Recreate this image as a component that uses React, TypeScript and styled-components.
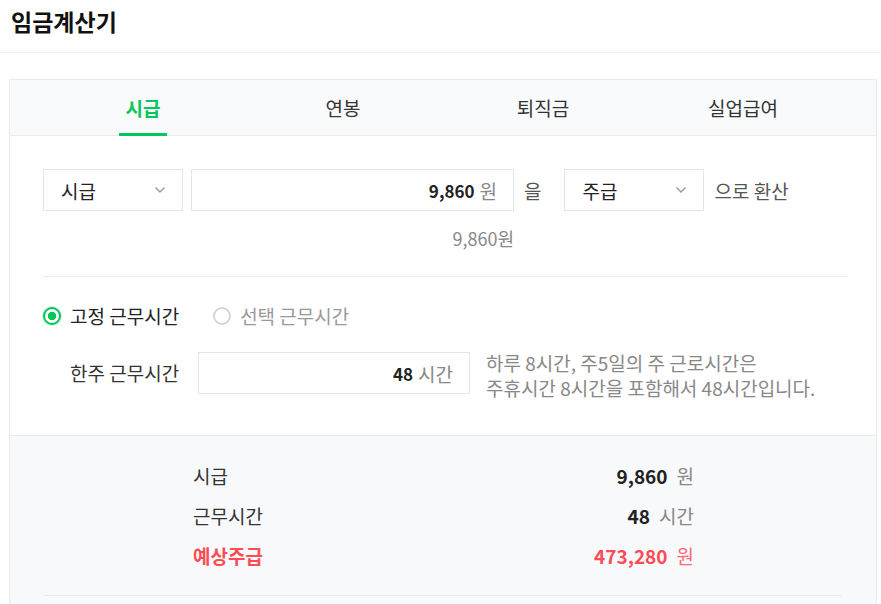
import styled, { createGlobalStyle } from "styled-components";
import { useState } from "react";

const GlobalStyle = createGlobalStyle`
  body {
    margin: 0;
    background: #fff;
    font-family: "Noto Sans CJK KR", "Noto Sans", sans-serif;
    color: #222;
  }
`;

const Header = styled.header`
  height: 53px;
  box-sizing: border-box;
  padding: 5px 0 0 11px;
  border-bottom: 1px solid #efefef;
  h1 {
    margin: 0;
    font-size: 23px;
    font-weight: 700;
    line-height: 32px;
    color: #111;
  }
`;

const Card = styled.section`
  margin: 26px 0 0 9px;
  width: 868px;
  box-sizing: border-box;
  border: 1px solid #ebebeb;
  border-bottom: none;
`;

const TabBar = styled.nav`
  display: grid;
  grid-template-columns: repeat(4, 200px);
  padding: 0 33px;
  height: 56px;
  box-sizing: border-box;
  background: #f9fafc;
  border-bottom: 1px solid #ebebeb;
`;

const Tab = styled.div<{ $active?: boolean }>`
  position: relative;
  display: flex;
  align-items: center;
  justify-content: center;
  font-size: 19px;
  font-weight: ${(p) => (p.$active ? 700 : 400)};
  color: ${(p) => (p.$active ? "#03c75a" : "#333")};
  cursor: pointer;
  &::after {
    content: "";
    display: ${(p) => (p.$active ? "block" : "none")};
    position: absolute;
    bottom: -1px;
    left: 76px;
    width: 48px;
    height: 3px;
    background: #03c75a;
  }
`;

const Body = styled.div`
  padding: 33px 28px 35px 33px;
`;

const ConvertRow = styled.div`
  display: flex;
  align-items: center;
  height: 42px;
`;

const SelectBox = styled.div`
  display: flex;
  align-items: center;
  justify-content: space-between;
  width: 140px;
  height: 42px;
  box-sizing: border-box;
  padding: 0 16px 0 17px;
  border: 1px solid #e3e5e8;
  font-size: 19px;
  color: #222;
  background: #fff;
`;

const ValueBox = styled.div<{ $width: number; $ml: number }>`
  display: flex;
  align-items: center;
  justify-content: flex-end;
  gap: 5px;
  width: ${(p) => p.$width}px;
  height: 42px;
  margin-left: ${(p) => p.$ml}px;
  box-sizing: border-box;
  padding-right: 16px;
  border: 1px solid #e3e5e8;
  background: #fff;
  b {
    font-size: 17px;
    font-weight: 700;
    color: #222;
  }
  span {
    font-size: 19px;
    color: #888;
  }
`;

const Word = styled.span<{ $right: number }>`
  margin: 0 ${(p) => p.$right}px 0 10px;
  font-size: 19px;
  color: #555;
`;

const ResultLine = styled.div`
  width: 471px;
  margin-top: 15px;
  text-align: right;
  font-size: 18px;
  line-height: 24px;
  color: #888;
`;

const Divider = styled.hr`
  margin: 26px 0 0;
  border: none;
  border-top: 1px solid #ececec;
`;

const RadioRow = styled.div`
  display: flex;
  gap: 34px;
  margin-top: 27px;
`;

const RadioLabel = styled.label<{ $checked?: boolean }>`
  display: flex;
  align-items: center;
  gap: 9px;
  font-size: 19px;
  line-height: 24px;
  color: ${(p) => (p.$checked ? "#222" : "#999")};
  cursor: pointer;
`;

const RadioDot = styled.span<{ $checked?: boolean }>`
  width: 18px;
  height: 18px;
  box-sizing: border-box;
  border-radius: 50%;
  border: 2px solid ${(p) => (p.$checked ? "#03c75a" : "#d6d6d6")};
  background: ${(p) =>
    p.$checked ? "radial-gradient(circle, #03c75a 0 4px, #fff 4.5px)" : "#fff"};
  box-shadow: ${(p) => (p.$checked ? "0 0 0 1px rgba(3,199,90,0.25)" : "none")};
`;

const HoursRow = styled.div`
  display: flex;
  align-items: flex-start;
  margin-top: 24px;
  padding-left: 27px;
`;

const FieldLabel = styled.span`
  width: 128px;
  line-height: 42px;
  font-size: 19px;
  color: #333;
`;

const HelpText = styled.p`
  margin: -2px 0 0 16px;
  font-size: 19px;
  line-height: 25px;
  color: #888;
`;

const Summary = styled.div`
  background: #f8f9fb;
  border-top: 1px solid #ebebeb;
  padding: 19px 0 0;
  height: 170px;
  box-sizing: border-box;
`;

const SummaryRow = styled.div<{ $highlight?: boolean }>`
  display: flex;
  justify-content: space-between;
  align-items: center;
  width: 501px;
  height: 40px;
  margin-left: 183px;
  font-size: 19px;
  color: ${(p) => (p.$highlight ? "#ff4b55" : "#333")};
  font-weight: ${(p) => (p.$highlight ? 700 : 400)};
`;

const Amount = styled.span<{ $highlight?: boolean }>`
  display: flex;
  align-items: center;
  gap: 9px;
  b {
    font-weight: 700;
    color: ${(p) => (p.$highlight ? "#ff4b55" : "#222")};
  }
  span {
    font-weight: 400;
    color: ${(p) => (p.$highlight ? "#ff6b73" : "#888")};
  }
`;

const BottomLine = styled.div`
  margin: 20px 0 0 34px;
  width: 797px;
  border-top: 1px solid #e6e6e6;
`;

const Chevron = () => (
  <svg width="12" height="8" viewBox="0 0 12 8">
    <polyline
      points="1.5,1.5 6,6 10.5,1.5"
      fill="none"
      stroke="#999"
      strokeWidth="1.4"
    />
  </svg>
);

const tabs = ["시급", "연봉", "퇴직금", "실업급여"];

export default function App() {
  const [active, setActive] = useState(0);
  const [fixed, setFixed] = useState(true);

  return (
    <>
      <GlobalStyle />
      <Header>
        <h1>임금계산기</h1>
      </Header>
      <Card>
        <TabBar>
          {tabs.map((t, i) => (
            <Tab key={t} $active={i === active} onClick={() => setActive(i)}>
              {t}
            </Tab>
          ))}
        </TabBar>
        <Body>
          <ConvertRow>
            <SelectBox>
              시급
              <Chevron />
            </SelectBox>
            <ValueBox $width={323} $ml={8}>
              <b>9,860</b>
              <span>원</span>
            </ValueBox>
            <Word $right={23}>을</Word>
            <SelectBox>
              주급
              <Chevron />
            </SelectBox>
            <Word $right={0}>으로 환산</Word>
          </ConvertRow>
          <ResultLine>9,860원</ResultLine>
          <Divider />
          <RadioRow>
            <RadioLabel $checked={fixed} onClick={() => setFixed(true)}>
              <RadioDot $checked={fixed} />
              고정 근무시간
            </RadioLabel>
            <RadioLabel $checked={!fixed} onClick={() => setFixed(false)}>
              <RadioDot $checked={!fixed} />
              선택 근무시간
            </RadioLabel>
          </RadioRow>
          <HoursRow>
            <FieldLabel>한주 근무시간</FieldLabel>
            <ValueBox $width={272} $ml={0}>
              <b>48</b>
              <span>시간</span>
            </ValueBox>
            <HelpText>
              하루 8시간, 주5일의 주 근로시간은
              <br />
              주휴시간 8시간을 포함해서 48시간입니다.
            </HelpText>
          </HoursRow>
        </Body>
        <Summary>
          <SummaryRow>
            시급
            <Amount>
              <b>9,860</b>
              <span>원</span>
            </Amount>
          </SummaryRow>
          <SummaryRow>
            근무시간
            <Amount>
              <b>48</b>
              <span>시간</span>
            </Amount>
          </SummaryRow>
          <SummaryRow $highlight>
            예상주급
            <Amount $highlight>
              <b>473,280</b>
              <span>원</span>
            </Amount>
          </SummaryRow>
          <BottomLine />
        </Summary>
      </Card>
    </>
  );
}
